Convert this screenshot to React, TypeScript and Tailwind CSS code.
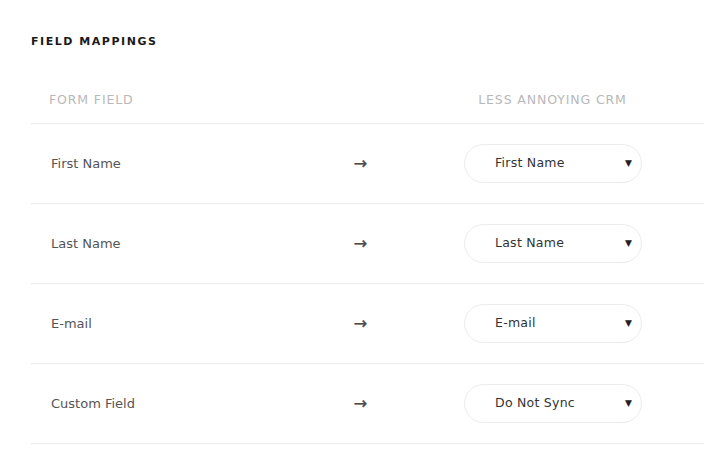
const rows = [
  { field: "First Name", crm: "First Name" },
  { field: "Last Name", crm: "Last Name" },
  { field: "E-mail", crm: "E-mail" },
  { field: "Custom Field", crm: "Do Not Sync" },
];

function CrmSelect({ value }: { value: string }) {
  return (
    <div className="flex h-[39px] w-[178px] items-center justify-between rounded-full border border-[#ececec] bg-white pl-[30px] pr-[9px]">
      <span className="text-[12.5px] tracking-[0.02em] text-[#333]">{value}</span>
      <span className="text-[9px] leading-none text-[#222]">▼</span>
    </div>
  );
}

export default function App() {
  return (
    <div
      className="h-[459px] w-[722px] bg-white pl-[31px] pr-[18px] pt-[35px]"
      style={{ fontFamily: '"DejaVu Sans", "Noto Sans", sans-serif' }}
    >
      <h2 className="text-[11px] font-bold uppercase leading-[14px] tracking-[0.14em] text-[#1a1a1a]">
        Field Mappings
      </h2>
      <div className="mt-[31px]">
        <div className="flex h-[44px] items-center border-b border-[#ebebeb] pb-[2px]">
          <div className="w-[290px] pl-[18px] text-[12.5px] uppercase tracking-[0.07em] text-[#b8b8b8]">
            Form Field
          </div>
          <div className="w-[78px]" />
          <div className="flex-1 pl-[2px] text-center text-[12.5px] uppercase tracking-[0.07em] text-[#b8b8b8]">
            Less Annoying CRM
          </div>
        </div>
        {rows.map((r) => (
          <div
            key={r.field}
            className="flex h-[80px] items-center border-b border-[#ebebeb]"
          >
            <div className="w-[290px] pl-[20px] text-[13px] text-[#555]">{r.field}</div>
            <div className="w-[78px] pl-[1px] text-center text-[16px] leading-none text-[#4a4a4a] [-webkit-text-stroke:0.4px_#4a4a4a]">
              →
            </div>
            <div className="flex flex-1 justify-center pl-[3px]">
              <CrmSelect value={r.crm} />
            </div>
          </div>
        ))}
      </div>
    </div>
  );
}
